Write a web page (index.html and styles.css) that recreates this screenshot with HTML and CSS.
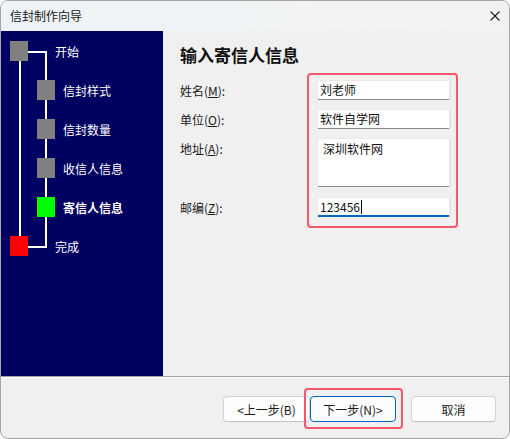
FILE: index.html
```html
<!DOCTYPE html>
<html lang="zh-CN">
<head>
<meta charset="utf-8">
<title>信封制作向导</title>
<link rel="stylesheet" href="styles.css">
</head>
<body>
<div class="window">
  <div class="titlebar">
    <span class="title">信封制作向导</span>
    <svg class="close" width="10" height="10" viewBox="0 0 10 10"><path d="M0.5 0.5 L9.5 9.5 M9.5 0.5 L0.5 9.5" stroke="#1b1b1b" stroke-width="1.1" fill="none"/></svg>
  </div>
  <div class="body">
    <div class="steps">
      <svg class="tree" width="162" height="345" viewBox="0 0 162 345">
        <rect x="27" y="20" width="19" height="2" fill="#fff"/>
        <rect x="44" y="20" width="2" height="197" fill="#fff"/>
        <rect x="27" y="215" width="19" height="2" fill="#fff"/>
        <rect x="18" y="30" width="2" height="175" fill="#fff"/>
        <rect x="9" y="10" width="18" height="20" fill="#808080"/>
        <rect x="36" y="49" width="18" height="20" fill="#808080"/>
        <rect x="36" y="88" width="18" height="20" fill="#808080"/>
        <rect x="36" y="127" width="18" height="20" fill="#808080"/>
        <rect x="36" y="166" width="18" height="20" fill="#00ff00"/>
        <rect x="9" y="205" width="18" height="20" fill="#ff0000"/>
      </svg>
      <ul class="step-list">
        <li class="step root">开始</li>
        <li class="step sub">信封样式</li>
        <li class="step sub">信封数量</li>
        <li class="step sub">收信人信息</li>
        <li class="step sub current">寄信人信息</li>
        <li class="step root">完成</li>
      </ul>
    </div>
    <div class="pane">
      <h1 class="heading">输入寄信人信息</h1>
      <div class="form">
        <div class="label row1">姓名(<u>M</u>):</div>
        <div class="field row1">刘老师</div>
        <div class="label row2">单位(<u>O</u>):</div>
        <div class="field row2">软件自学网</div>
        <div class="label row3">地址(<u>A</u>):</div>
        <div class="field area row3">深圳软件网</div>
        <div class="label row4">邮编(<u>Z</u>):</div>
        <div class="field focused row4">123456<span class="caret"></span></div>
        <div class="highlight"></div>
      </div>
    </div>
  </div>
  <div class="footer">
    <button class="btn prev">&lt;上一步(B)</button>
    <span class="ring"><button class="btn next">下一步(N)&gt;</button></span>
    <button class="btn cancel">取消</button>
  </div>
</div>
</body>
</html>
```

FILE: styles.css
```css
* { box-sizing: border-box; }
html, body { margin: 0; padding: 0; background: #ffffff; }
body {
  font-family: "Noto Sans CJK SC", "Noto Sans", sans-serif;
  font-size: 12px;
  color: #1a1a1a;
}
.window {
  width: 510px;
  height: 439px;
  border: 1px solid #a6a6a6;
  border-radius: 8px;
  overflow: hidden;
  display: flex;
  flex-direction: column;
  background: #f0f0f0;
}
.titlebar {
  height: 30px;
  flex: none;
  display: flex;
  align-items: center;
  justify-content: space-between;
  padding: 0 9px 0 9px;
  background: linear-gradient(to right, #edf3f7, #f1f3f4 60%, #f3f2f1);
}
.title { font-size: 12px; line-height: 30px; color: #1a1a1a; }
.close { display: block; margin-top: -1px; }
.body {
  height: 345px;
  flex: none;
  display: flex;
}
.steps {
  position: relative;
  width: 162px;
  flex: none;
  background: #000060;
}
.tree { position: absolute; left: 0; top: 0; }
.step-list {
  position: relative;
  list-style: none;
  margin: 0;
  padding: 1px 0 0 0;
}
.step {
  height: 39px;
  line-height: 39px;
  color: #ffffff;
  font-size: 12px;
}
.step.root { padding-left: 54px; }
.step.sub { padding-left: 62px; }
.step.current { font-weight: bold; }
.pane {
  flex: 1;
  padding: 14px 0 0 17px;
  background: #f0f0f0;
}
.heading {
  margin: 0;
  font-size: 17px;
  line-height: 20px;
  font-weight: bold;
  color: #111;
}
.form {
  margin-top: 15px;
  display: grid;
  grid-template-columns: 137px 133px;
  grid-template-rows: 20px 20px 50px 20px;
  row-gap: 9px;
}
.row1 { grid-row: 1; }
.row2 { grid-row: 2; }
.row3 { grid-row: 3; }
.row4 { grid-row: 4; }
.label {
  grid-column: 1;
  line-height: 22px;
  font-size: 12px;
  color: #1a1a1a;
  white-space: nowrap;
}
.field {
  grid-column: 2;
  background: #ffffff;
  border: 1px solid #e8e8e8;
  border-bottom-color: #8a8a8a;
  border-radius: 2px;
  padding: 0 2px;
  line-height: 18px;
  font-size: 12px;
  color: #111;
  white-space: nowrap;
  box-shadow: 1px 0 0 #e0e0e0;
}
.field.area {
  height: 49px;
  padding: 1px 5px;
}
.field.focused {
  border-bottom: 2px solid #0067c0;
  line-height: 18px;
  display: flex;
  align-items: center;
}
.caret {
  display: inline-block;
  width: 1px;
  height: 14px;
  background: #000;
  margin-left: 1px;
}
.highlight {
  grid-column: 2;
  grid-row: 1 / 5;
  margin: -7px -8px -11px -10px;
  border: 2px solid #f4566b;
  border-radius: 4px;
  pointer-events: none;
}
.footer {
  flex: 1;
  border-top: 1px solid #a0a0a0;
  box-shadow: inset 0 1px 0 #ffffff;
  display: flex;
  align-items: flex-start;
  justify-content: flex-end;
  padding: 19px 13px 0 0;
}
.btn {
  height: 26px;
  font-family: "Noto Sans CJK SC", "Noto Sans", sans-serif;
  font-size: 12px;
  color: #1a1a1a;
  background: #fdfdfd;
  border: 1px solid #d3d3d3;
  border-bottom-color: #c2c2c2;
  border-radius: 4px;
  padding: 0;
  display: block;
}
.prev { width: 87px; }
.ring {
  position: relative;
  display: block;
  margin-right: 15px;
}
.ring::after {
  content: "";
  position: absolute;
  left: -6px;
  right: -7px;
  top: -8px;
  bottom: -7px;
  border: 2px solid #f4566b;
  border-radius: 4px;
}
.next {
  width: 86px;
  border-color: #0067c0;
}
.cancel { width: 85px; }
```
